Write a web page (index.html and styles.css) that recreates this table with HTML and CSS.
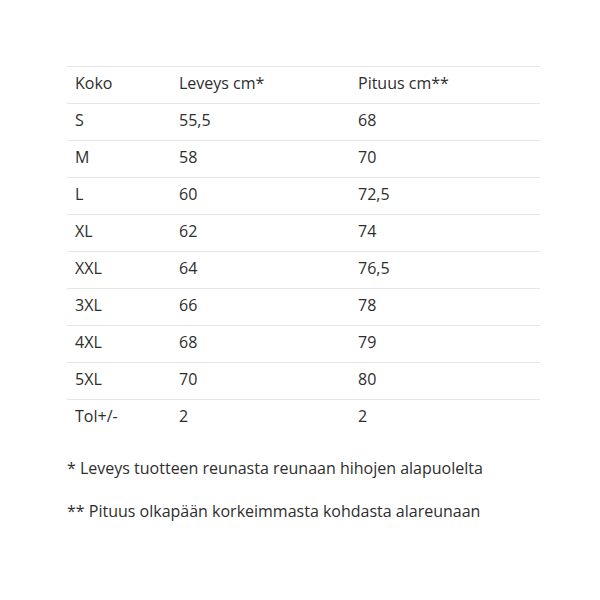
FILE: index.html
```html
<!DOCTYPE html>
<html lang="fi">
<head>
<meta charset="utf-8">
<link rel="stylesheet" href="styles.css">
</head>
<body>
<div class="wrap">
  <table class="sizes">
    <colgroup><col class="c1"><col class="c2"><col class="c3"></colgroup>
    <tr><td>Koko</td><td>Leveys cm*</td><td>Pituus cm**</td></tr>
    <tr><td>S</td><td>55,5</td><td>68</td></tr>
    <tr><td>M</td><td>58</td><td>70</td></tr>
    <tr><td>L</td><td>60</td><td>72,5</td></tr>
    <tr><td>XL</td><td>62</td><td>74</td></tr>
    <tr><td>XXL</td><td>64</td><td>76,5</td></tr>
    <tr><td>3XL</td><td>66</td><td>78</td></tr>
    <tr><td>4XL</td><td>68</td><td>79</td></tr>
    <tr><td>5XL</td><td>70</td><td>80</td></tr>
    <tr><td>Tol+/-</td><td>2</td><td>2</td></tr>
  </table>
  <p class="note">* Leveys tuotteen reunasta reunaan hihojen alapuolelta</p>
  <p class="note">** Pituus olkapään korkeimmasta kohdasta alareunaan</p>
</div>
</body>
</html>
```
FILE: styles.css
```css
html, body { margin: 0; padding: 0; background: #fff; }
body { font-family: "Open Sans", sans-serif; color: #2e2e2e; font-size: 16px; }
.wrap { padding: 66px 0 0 67px; width: 473px; }
.sizes { border-collapse: collapse; width: 473px; table-layout: fixed; font-size: 16px; }
.c1 { width: 104px; }
.c2 { width: 179px; }
.c3 { width: 190px; }
.sizes td { border-top: 1px solid #e6e6e6; padding: 0 8px 3px; height: 33px; line-height: 21px; vertical-align: middle; }
.note { margin: 0; line-height: 20px; }
.note:first-of-type { margin-top: 22px; }
.note + .note { margin-top: 23px; }
```
